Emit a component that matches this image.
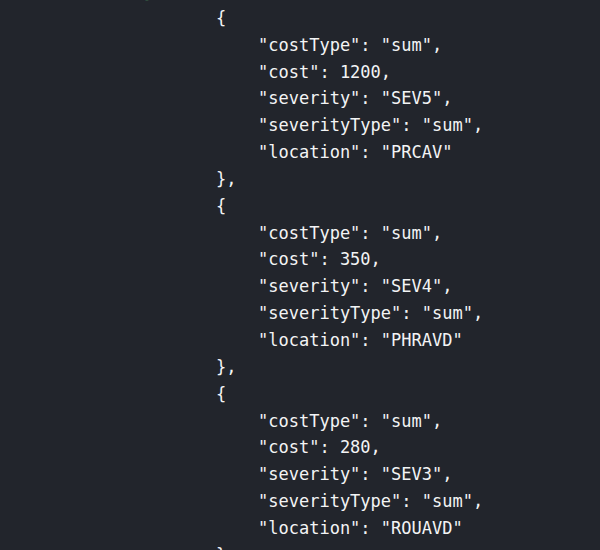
export default function App() {
  const blocks = [
    { cost: "1200", sev: "SEV5", loc: "PRCAV" },
    { cost: "350", sev: "SEV4", loc: "PHRAVD" },
    { cost: "280", sev: "SEV3", loc: "ROUAVD" },
  ];
  const lines = [];
  blocks.forEach((b) => {
    lines.push({ t: "{", ind: 0 });
    lines.push({ t: '"costType": "sum",', ind: 1 });
    lines.push({ t: `"cost": ${b.cost},`, ind: 1 });
    lines.push({ t: `"severity": "${b.sev}",`, ind: 1 });
    lines.push({ t: '"severityType": "sum",', ind: 1 });
    lines.push({ t: `"location": "${b.loc}"`, ind: 1 });
    lines.push({ t: "},", ind: 0 });
  });
  return (
    <div className="w-[600px] h-[550px] overflow-hidden bg-[#22252c]">
      <div
        className="mt-[-22px] text-[17px] leading-[26.85px] text-[#f3f4f5] whitespace-pre"
        style={{ fontFamily: '"DejaVu Sans Mono", "Liberation Mono", monospace' }}
      >
        <div className="pl-[62px] h-[26.85px] text-[#2f4a3c]">"severityList": [</div>
        {lines.map((l, i) => (
          <div key={i} className={l.ind ? "pl-[258px] h-[26.85px]" : "pl-[216px] h-[26.85px]"}>
            {l.t}
          </div>
        ))}
      </div>
    </div>
  );
}
